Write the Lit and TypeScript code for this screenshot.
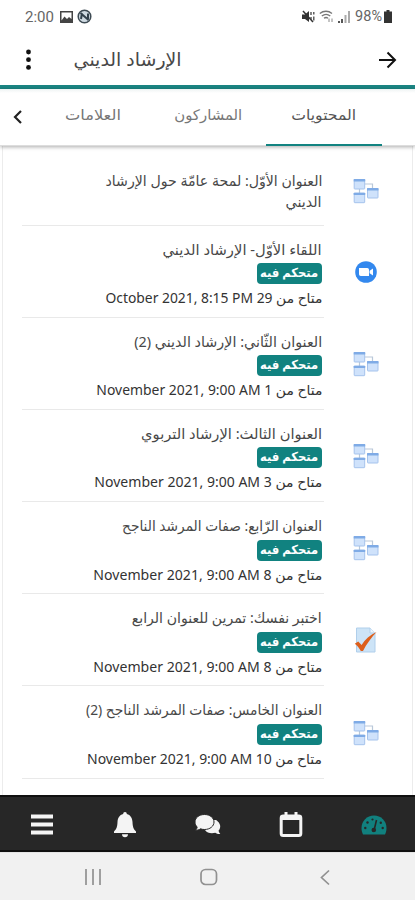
import { LitElement, html, css, svg } from "lit";
import { customElement, property } from "lit/decorators.js";

interface Line { text: string; width: number; }
interface Item { icon: "map" | "zoom" | "quiz"; title: Line[]; date?: Line; }

const badge = "متحكم فيه";

const items: Item[] = [
  { icon: "map", title: [{ text: "العنوان الأوّل: لمحة عامّة حول الإرشاد", width: 217 }, { text: "الديني", width: 36 }] },
  { icon: "zoom", title: [{ text: "اللقاء الأوّل- الإرشاد الديني", width: 159 }], date: { text: "متاح من 29 October 2021, 8:15 PM", width: 217 } },
  { icon: "map", title: [{ text: "العنوان الثّاني: الإرشاد الديني (2)", width: 188 }], date: { text: "متاح من 1 November 2021, 9:00 AM", width: 226 } },
  { icon: "map", title: [{ text: "العنوان الثالث: الإرشاد التربوي", width: 181 }], date: { text: "متاح من 3 November 2021, 9:00 AM", width: 228 } },
  { icon: "map", title: [{ text: "العنوان الرّابع: صفات المرشد الناجح", width: 200 }], date: { text: "متاح من 8 November 2021, 9:00 AM", width: 229 } },
  { icon: "quiz", title: [{ text: "اختبر نفسك: تمرين للعنوان الرابع", width: 190 }], date: { text: "متاح من 8 November 2021, 9:00 AM", width: 229 } },
  { icon: "map", title: [{ text: "العنوان الخامس: صفات المرشد الناجح (2)", width: 236 }], date: { text: "متاح من 10 November 2021, 9:00 AM", width: 235 } },
];

const win = (x: number, y: number) => svg`
  <rect x=${x + 0.5} y=${y + 0.5} width="10.500" height="9.500" rx="0.6" fill="#cfe2fb" stroke="#a5c3ec"/>
  <rect x=${x} y=${y} width="11.500" height="2.400" rx="0.5" fill="#7fabe6"/>`;

const mapIcon = html`<svg width="26" height="26" viewBox="0 0 26 26">
  <path d="M6.500 10v5M12 6h7.500v4" fill="none" stroke="#b9c8d9" stroke-width="1.200"/>
  ${win(0.7, 1)}${win(0.7, 14.7)}${win(14, 10)}
</svg>`;

const zoomIcon = html`<svg width="24" height="24" viewBox="0 0 24 24">
  <circle cx="12" cy="12" r="10.800" fill="#3388ee"/>
  <path d="M5 8h8.200a1.800 1.800 0 0 1 1.800 1.800v6.200H6.800A1.800 1.800 0 0 1 5 14.200z" fill="#fff"/>
  <path d="M15.600 10.800 19 8.400v7.200l-3.400-2.400z" fill="#fff"/>
</svg>`;

const quizIcon = html`<svg width="26" height="26" viewBox="0 0 26 26">
  <path d="M3.500 1h13.500l5 5v19H3.500z" fill="#cde4f7" stroke="#b0cfeb"/>
  <path d="M17 1v5h5" fill="#eef6fd" stroke="#b0cfeb"/>
  <path d="M1.800 16.800l3.400-2.300 3.400 3.600C12 12.500 17 8 23.500 5 18.500 10.500 13.500 17 10 24H7.800C6.300 21.300 4.300 18.800 1.800 16.800z" fill="#dd5f1c"/>
</svg>`;

/* A single line of text condensed or widened to a given width. */
@customElement("fit-line")
class FitLine extends LitElement {
  @property() text = "";
  @property({ type: Number }) width = 0;

  static styles = css`
    :host { display: block; direction: rtl; white-space: nowrap; flex: none; }
    .ink { display: inline-block; transform-origin: 100% 50%; }
  `;

  private fit() {
    const el = this.renderRoot.querySelector(".ink") as HTMLElement;
    el.style.transform = "none";
    const natural = el.getBoundingClientRect().width;
    if (natural) el.style.transform = `scaleX(${this.width / natural})`;
  }

  updated() {
    this.style.width = `${this.width}px`;
    this.fit();
    document.fonts.ready.then(() => this.fit());
  }

  render() { return html`<span class="ink">${this.text}</span>`; }
}

const line = (l: Line, cls: string) => html`<fit-line class=${cls} .text=${l.text} .width=${l.width}></fit-line>`;

@customElement("app-root")
class AppRoot extends LitElement {
  static styles = css`
    * { box-sizing: border-box; }
    :host {
      display: flex; flex-direction: column; width: 415px; height: 900px; overflow: hidden;
      background: #fff; color: #3c3c3c; font-family: "Noto Sans", "DejaVu Sans", sans-serif;
    }
    svg { display: block; flex: none; }
    .status { height: 33px; flex: none; display: flex; align-items: center; padding: 0 23px 0 25px; color: #666; }
    .clock { font: 15px/20px Roboto, sans-serif; width: 30px; margin-right: 5px; white-space: nowrap; }
    .status svg + svg { margin-left: 4px; }
    .space { flex: 1; }
    .battery { font: 14.500px/20px Roboto, sans-serif; margin: 0 2px 0 4px; }
    .header { height: 52px; flex: none; display: flex; align-items: center; padding: 2px 18px 0 22px; color: #111; }
    .heading { font-size: 18px; line-height: 30px; height: 32px; margin-left: 38px; color: #484848; }
    .rule { height: 3.500px; flex: none; background: #1b8583; }
    .tabs {
      height: 57px; flex: none; display: flex; padding: 0 33px 0 13px; color: #777;
      border-bottom: 1px solid #ddd; box-shadow: 0 1px 4px #0005; z-index: 1; background: linear-gradient(#eef3f3, #fff 4px);
    }
    .prev { width: 22px; display: flex; align-items: center; color: #222; }
    .tab { width: 115.500px; height: 57px; display: flex; justify-content: center; align-items: center; font-size: 14.500px; line-height: 24px; padding-bottom: 6px; }
    .tab.on { color: #555; border-bottom: 2.500px solid #128381; padding-bottom: 4px; }
    .list { flex: 1; min-height: 0; margin: 0 2px; border: solid #ececec; border-width: 0 1px; padding-top: 3px; }
    .item { display: flex; height: 92.200px; padding: 0 0 0 19px; align-items: center; }
    .item.short { height: 77px; }
    .body {
      width: 302px; height: 100%; border-bottom: 1.500px solid #e9e9e9; padding: 11px 2px 0 0;
      display: flex; flex-direction: column; align-items: flex-end;
    }
    .short .body { padding-top: 19px; }
    .icon { flex: 1; display: flex; justify-content: center; padding-right: 4px; }
    .short .icon { padding-top: 8px; }
    .title { font-size: 14.500px; line-height: 24px; height: 26.500px; color: #484848; }
    .short .title { height: 21px; }
    .badge {
      width: 65px; height: 21px; border-radius: 4px; background: #118280; color: #fff;
      display: flex; justify-content: center; font-size: 12.500px; line-height: 19px; font-weight: 700;
    }
    .date { font-size: 13.500px; line-height: 20px; margin-top: 4px; color: #333; }
    .nav {
      height: 57px; flex: none; background: #272727; border: solid #101010; border-width: 2px 0;
      display: flex; color: #f4f4f4;
    }
    .nav div { width: 83px; display: flex; align-items: center; justify-content: center; padding-top: 2px; }
    .nav .active { color: #11807e; }
    .system { height: 48px; flex: none; background: #f1f1f1; border-top: 1px solid #e4e4e4; display: flex; justify-content: space-between; align-items: center; padding: 1px 82px 0 84px; color: #919191; }
  `;

  private item(it: Item) {
    const icon = { map: mapIcon, zoom: zoomIcon, quiz: quizIcon }[it.icon];
    return html`<div class="item ${it.date ? "" : "short"}">
      <div class="body">
        ${it.title.map((l) => line(l, "title"))}
        ${it.date ? html`<div class="badge">${line({ text: badge, width: 58 }, "tag")}</div>${line(it.date, "date")}` : ""}
      </div>
      <div class="icon">${icon}</div>
    </div>`;
  }

  render() {
    return html`
      <div class="status">
        <span class="clock">2:00</span>
        <svg width="13" height="12" viewBox="0 0 13 12"><path fill="#444" fill-rule="evenodd" d="M0 0h13v12H0zM1.500 1.500v8l3-4 2.500 2.500 2-2 2.500 2V1.500z"/></svg>
        <svg width="15" height="15" viewBox="0 0 15 15"><circle cx="7.500" cy="7.500" r="6.300" fill="#cfdae2" stroke="#3d4a53" stroke-width="1.500"/><path d="M3.500 4l8 7M4 10l1-6M11 4.500v6" stroke="#33424d" stroke-width="2" fill="none"/></svg>
        <span class="space"></span>
        <svg width="13" height="13" viewBox="0 0 13 13"><path d="M0 4.500h3L7 1v11L3 9H0z" fill="#333"/><path d="M1 1l10 11" stroke="#333" stroke-width="1.500"/><path d="M9 2v3M9 7v3M11.800 2v2.500M11.800 6.500v4" stroke="#444" stroke-width="1.300"/></svg>
        <svg width="15" height="13" viewBox="0 0 15 13"><path d="M.8 3.500C4.500.5 9.500.5 13 3.500M2.800 6c2.500-2 6-2 8.500 0M5 8.300c1.300-1 2.800-1 4 0" stroke="#777" stroke-width="1.300" fill="none"/><path d="M10 12V8.500M13 8.500V12" stroke="#888"/></svg>
        <svg width="13" height="12" viewBox="0 0 13 12"><path d="M1 12v-2M4 12V8" stroke="#555" stroke-width="2"/><path d="M7.500 12V4M11 12V0" stroke="#aaa" stroke-width="2"/></svg>
        <span class="battery">98%</span>
        <svg width="8" height="13" viewBox="0 0 8 13"><path d="M2.500 0h3v1.500H8V13H0V1.500h2.500z" fill="#333"/></svg>
      </div>
      <div class="header">
        <svg width="14" height="22" viewBox="0 0 14 22" fill="currentColor"><circle cx="6.500" cy="3" r="2.400"/><circle cx="6.500" cy="10.700" r="2.400"/><circle cx="6.500" cy="18.400" r="2.400"/></svg>
        ${line({ text: "الإرشاد الديني", width: 108 }, "heading")}
        <span class="space"></span>
        <svg width="19" height="18" viewBox="0 0 19 18"><path d="M1 9h16M9.500 1.500L17 9l-7.500 7.500" fill="none" stroke="currentColor" stroke-width="2"/></svg>
      </div>
      <div class="rule"></div>
      <div class="tabs">
        <div class="prev"><svg width="10" height="14" viewBox="0 0 10 14"><path d="M8 1L2 7l6 6" fill="none" stroke="currentColor" stroke-width="2.200"/></svg></div>
        <div class="tab">${line({ text: "العلامات", width: 56 }, "name")}</div>
        <div class="tab">${line({ text: "المشاركون", width: 68 }, "name")}</div>
        <div class="tab on">${line({ text: "المحتويات", width: 65 }, "name")}</div>
      </div>
      <div class="list">${items.map((it) => this.item(it))}</div>
      <div class="nav">
        <div><svg width="24" height="22" viewBox="0 0 24 22"><path d="M1 2.500h22M1 10.500h22M1 18.500h22" stroke="currentColor" stroke-width="4"/></svg></div>
        <div><svg width="24" height="26" viewBox="0 0 24 26" fill="currentColor"><path d="M12 0c1.200 0 1.800.8 1.800 2 3.800 1 5.500 4 5.700 8 .2 5 1 7 3.500 9.500V21H1v-1.500C3.500 17 4.300 15 4.500 10c.2-4 1.900-7 5.700-8 0-1.200.6-2 1.800-2zM9 22.300h6c0 1.800-1.200 3-3 3s-3-1.200-3-3z"/></svg></div>
        <div><svg width="26" height="22" viewBox="0 0 26 22"><path d="M11 6h10c3 2 5 5 4 8-.3 1-.8 2-1.500 2.800.3 1.200 1 2.200 1.800 3.200-2 .2-3.800-.4-5-1.300-4 1.200-8.300.2-10.300-2.700z" fill="currentColor"/><path d="M9.500.5C15 .5 19 3.800 19 8s-4 7.500-9.500 7.500c-1.500 0-2.800-.2-4-.7-1.300 1-3.200 1.600-5 1.500.9-1 1.500-2 1.700-3.200C.8 11.700 0 10 0 8 0 3.800 4 .5 9.500.5z" fill="currentColor" stroke="#272727"/></svg></div>
        <div><svg width="24" height="27" viewBox="0 0 24 27"><rect x="2.200" y="5" width="19.600" height="19.500" rx="2" fill="none" stroke="currentColor" stroke-width="3"/><path d="M1.500 4.500h21v4.500h-21zM5.500 1H8.500v4h-3zM15.500 1h3v4h-3z" fill="currentColor"/></svg></div>
        <div class="active"><svg width="26" height="20" viewBox="0 0 26 20"><path d="M13 .5C20 .5 25.500 6 25.500 13c0 2.400-.6 4.600-1.500 6.500H2C1.100 17.600.5 15.400.5 13 .5 6 6 .5 13 .5z" fill="currentColor"/><path d="M15.500 5l-2 8.500" stroke="#272727" stroke-width="1.600"/><g fill="#272727"><circle cx="12.800" cy="15" r="2.300"/><circle cx="11.500" cy="4.500" r="1.100"/><circle cx="6.500" cy="7.500" r="1.200"/><circle cx="4.300" cy="13" r="1.200"/><circle cx="19.800" cy="7.800" r="1.200"/><circle cx="21.700" cy="13" r="1.200"/></g></svg></div>
      </div>
      <div class="system">
        <svg width="18" height="16" viewBox="0 0 18 16"><path d="M2 0v16M9 0v16M16 0v16" stroke="currentColor" stroke-width="1.700"/></svg>
        <svg width="18" height="18" viewBox="0 0 18 18"><rect x="1" y="1.500" width="15.500" height="15" rx="4.500" fill="none" stroke="currentColor" stroke-width="1.700"/></svg>
        <svg width="18" height="17" viewBox="0 0 18 17"><path d="M14 1.500L6.500 8.500l7.500 7" fill="none" stroke="currentColor" stroke-width="1.700"/></svg>
      </div>`;
  }
}
